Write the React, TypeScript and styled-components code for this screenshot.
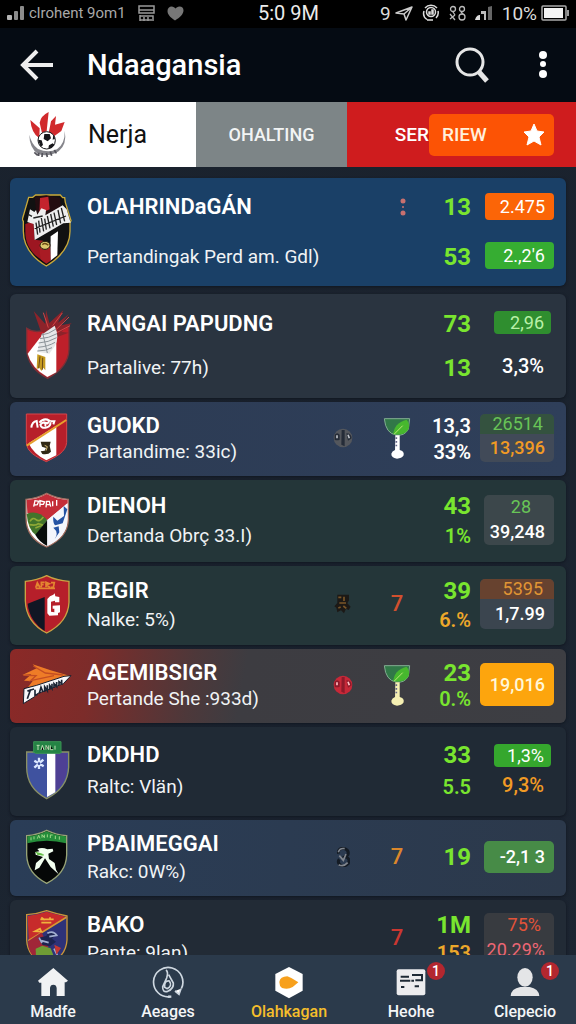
import React from 'react';
import styled, { createGlobalStyle } from 'styled-components';

const GlobalStyle = createGlobalStyle`
  * { box-sizing: border-box; }
  body { margin: 0; background: #1b232e; font-family: Roboto, "Liberation Sans", sans-serif; color: #fff; }
  button { font: inherit; color: inherit; border: 0; background: none; padding: 0; cursor: pointer; }
  svg { display: block; flex-shrink: 0; }
`;

const Screen = styled.div`
  display: flex;
  flex-direction: column;
  height: 100vh;
  background: linear-gradient(#1a222d, #1c2531);
`;

const StatusBar = styled.div`
  display: grid;
  grid-template-columns: 1fr auto 1fr;
  align-items: center;
  flex-shrink: 0;
  height: 28px;
  padding: 0 6px 2px 7px;
  background: #000;
  color: #dcdcdc;
`;
const StatusGroup = styled.div<{ $end?: boolean }>`
  display: flex;
  align-items: center;
  gap: ${p => (p.$end ? 9 : 12)}px;
  justify-content: ${p => (p.$end ? 'flex-end' : 'flex-start')};
`;
const Tight = styled.span`
  display: flex;
  align-items: center;
  gap: 4px;
`;
const Carrier = styled.span`
  font-size: 15px;
  color: #a9a9a9;
`;
const StatusText = styled.span`
  font-size: 19px;
`;
const Clock = styled.time`
  font-size: 20px;
  color: #ececec;
`;

const AppBar = styled.header`
  display: flex;
  align-items: center;
  flex-shrink: 0;
  height: 74px;
  padding: 0 25px 0 20px;
  background: #050b13;
`;
const Heading = styled.h1`
  flex: 1;
  margin: 0 0 0 33px;
  font-size: 29px;
  line-height: 36px;
  font-weight: 500;
`;
const IconButton = styled.button<{ $gap?: number }>`
  margin-left: ${p => p.$gap ?? 0}px;
`;

const Tabs = styled.nav`
  display: grid;
  grid-template-columns: 196fr 151fr 229fr;
  flex-shrink: 0;
  height: 65px;
`;
const TeamTab = styled.button`
  display: flex;
  align-items: center;
  gap: 19px;
  padding-left: 27px;
  background: #fff;
  color: #111;
  font-size: 25px;
`;
const PlainTab = styled.button`
  background: #7d8587;
  color: #f2f4f4;
  font-size: 18px;
  font-weight: 500;
`;
const AccentTab = styled.div`
  display: flex;
  align-items: center;
  justify-content: flex-end;
  padding-right: 22px;
  background: #cf1c1e;
  font-size: 19px;
  font-weight: 500;
`;
const SerButton = styled.button`
  padding-left: 20px;
`;
const ReviewButton = styled.button`
  display: flex;
  align-items: center;
  justify-content: space-between;
  width: 125px;
  height: 42px;
  padding: 0 9px 0 13px;
  border-radius: 5px;
  background: #fc5305;
  color: #fff0dc;
`;

const List = styled.ul`
  flex: 1;
  min-height: 0;
  display: flex;
  flex-direction: column;
  gap: 4px;
  margin: 0;
  padding: 11px 10px 0;
  overflow-y: auto;
  scrollbar-width: none;
  list-style: none;
`;
const Card = styled.li<{ $bg: string; $height: number; $after?: number }>`
  display: grid;
  grid-template-columns: 50px 1fr 40px 54px 63px 74px;
  align-items: center;
  flex-shrink: 0;
  min-height: ${p => p.$height}px;
  margin-bottom: ${p => p.$after ?? 0}px;
  padding: 0 12px 3px;
  border-radius: 6px;
  background: ${p => p.$bg};
  box-shadow: 0 1px 3px #10161f;
`;
const Stack = styled.div<{ $gap: number }>`
  display: flex;
  flex-direction: column;
  gap: ${p => p.$gap}px;
  white-space: nowrap;
`;
const NameStack = styled(Stack)`
  padding-left: 15px;
`;
const Name = styled.h2`
  margin: 0;
  font-size: 22px;
  line-height: 28px;
  font-weight: 600;
`;
const Detail = styled.p`
  margin: 0;
  font-size: 19px;
  line-height: 24px;
  color: #f0f3f5;
`;
const Slot = styled.div`
  display: flex;
  justify-content: center;
`;
const MarkSlot = styled(Slot)<{ $top?: boolean }>`
  align-self: ${p => (p.$top ? 'start' : 'center')};
  padding-left: ${p => (p.$top ? 26 : 14)}px;
  padding-top: ${p => (p.$top ? 20 : 0)}px;
`;
const Digit = styled.span<{ $color: string }>`
  font-size: 22px;
  line-height: 24px;
  font-weight: 500;
  color: ${p => p.$color};
`;
const ScoreStack = styled(Stack)`
  align-items: flex-end;
  padding-right: 9px;
`;
const Score = styled.span<{ $color: string; $big?: boolean }>`
  font-size: ${p => (p.$big ? 24 : 20)}px;
  line-height: 24px;
  font-weight: ${p => (p.$big ? 700 : 600)};
  color: ${p => p.$color};
  &:first-child { line-height: 28px; }
`;
const ValueStack = styled(Stack)`
  align-items: flex-end;
`;
const Pill = styled.span<{ $bg: string; $color?: string; $small?: boolean }>`
  width: ${p => (p.$small ? 57 : 69)}px;
  margin-right: ${p => (p.$small ? 3 : 0)}px;
  padding-right: ${p => (p.$small ? 7 : 9)}px;
  border-radius: 4px;
  background: ${p => p.$bg};
  color: ${p => p.$color ?? '#fff'};
  font-size: 18px;
  line-height: ${p => (p.$small ? 23 : 27)}px;
  text-align: right;
`;
const PlainValue = styled.span<{ $color: string }>`
  padding-right: 10px;
  font-size: 20px;
  line-height: 24px;
  font-weight: 500;
  color: ${p => p.$color};
`;
const Box = styled.div<{ $bg: string; $narrow?: boolean }>`
  justify-self: end;
  width: ${p => (p.$narrow ? 70 : 74)}px;
  border-radius: 5px;
  overflow: hidden;
  background: ${p => p.$bg};
`;
const BoxLine = styled.div<{ $color: string; $bg?: string; $tall?: number; $strong?: boolean; $inset?: number }>`
  padding-right: ${p => p.$inset ?? 9}px;
  background: ${p => p.$bg ?? 'transparent'};
  color: ${p => p.$color};
  font-size: 18px;
  font-weight: ${p => (p.$strong ? 500 : 400)};
  line-height: ${p => p.$tall ?? 24}px;
  text-align: right;
`;

const BottomNav = styled.nav`
  display: grid;
  grid-template-columns: 106fr 124fr 118fr 126fr 102fr;
  flex-shrink: 0;
  height: 69px;
  background: #2b3a4b;
`;
const NavItem = styled.a<{ $active?: boolean }>`
  display: flex;
  flex-direction: column;
  align-items: center;
  padding-top: 10px;
  gap: 3px;
  color: ${p => (p.$active ? '#f5be2b' : '#f3f5f7')};
  font-size: 16px;
  line-height: 20px;
  font-weight: 500;
  text-decoration: none;
`;
const NavGlyph = styled.span`
  position: relative;
  display: flex;
  align-items: center;
  height: 34px;
`;
const Count = styled.span`
  position: absolute;
  top: -3px;
  right: -19px;
  width: 18px;
  border-radius: 9px;
  background: #b3272f;
  color: #fff;
  font-size: 14px;
  line-height: 18px;
  text-align: center;
`;

/* ---------- status icons ---------- */
const Bars = () => (
  <svg width="18" height="16" viewBox="0 0 18 16" fill="#8c8c8c">
    <rect x="0" y="10" width="5" height="5" rx="1" fill="#b5b5b5" />
    <rect x="7" y="6" width="4" height="9" rx="1" />
    <rect x="13" y="1" width="4" height="14" rx="1" />
  </svg>
);
const Ticket = () => (
  <svg width="17" height="17" viewBox="0 0 17 17" fill="none" stroke="#999" strokeWidth="1.5">
    <path d="M1 1h15v7H1zM1 5h15M2 10v6M2 11h13v5M6 12v4M10 12v4M2 15h12" />
  </svg>
);
const Heart = () => (
  <svg width="17" height="15" viewBox="0 0 17 15" fill="#777">
    <path d="M8 14.5C3 11 .5 8.500.5 5 .5 2 2.500.5 4.500.5c2 0 3 1 4 2 1-1 2-2 4-2C15 .5 16.500 2 16.500 4.500 16.500 8 13 11.500 8 14.5z" />
  </svg>
);
const Plane = () => (
  <svg width="18" height="15" viewBox="0 0 18 15" fill="none" stroke="#ccc" strokeWidth="1.5" strokeLinejoin="round">
    <path d="M1 7 17 1 11 14 9 8zM9 8l8-7" />
  </svg>
);
const LockRing = () => (
  <svg width="18" height="18" viewBox="0 0 18 18" fill="none" stroke="#ddd" strokeWidth="1.500">
    <path d="M3 4a8 8 0 0 1 12 0M2 7a7.500 7.500 0 0 0 3 8.500M16 7a7.500 7.500 0 0 1-2 7M5 16h6" />
    <circle cx="9" cy="8" r="4.500" /><path d="M7 10V8h1v2zM10 10V6h1v4z" />
  </svg>
);
const Loops = () => (
  <svg width="17" height="17" viewBox="0 0 17 17" fill="none" stroke="#bbb" strokeWidth="1.300">
    <circle cx="4" cy="4" r="2.500" /><circle cx="13" cy="4" r="2.500" /><path d="M1 9l5 6M6 10l-5 4" /><circle cx="13" cy="12" r="3" /><path d="M4 7l2 3M12 7l2 2" />
  </svg>
);
const Ramp = () => (
  <svg width="18" height="16" viewBox="0 0 18 16">
    <path d="M0 15c1-4 3-5 5-5v5z" fill="#ddd" /><path d="M6 6h5v9H9V9H6z" fill="#bbb" /><path d="M13 2l4-1v14h-4z" fill="#666" />
  </svg>
);
const Battery = () => (
  <svg width="29" height="16" viewBox="0 0 29 16">
    <rect x="1" y="1" width="24" height="14" rx="1" fill="none" stroke="#aaa" strokeWidth="1.500" />
    <rect x="3" y="3" width="19" height="10" fill="#f4f4f4" /><path d="M26 5h2v6h-2z" fill="#999" />
  </svg>
);

/* ---------- crests ---------- */
const CrestSvg = ({ y, h, children }: { y: number; h: number; children: React.ReactNode }) => (
  <svg width="50" height={h / 3} viewBox={`66 ${y} 150 ${h}`} aria-hidden="true">{children}</svg>
);
const Crest1 = () => (
  <CrestSvg y={75} h={225}>
    <path d="M107 81H181L188 89H194L196 103 213 158 210 164V190C210 240 172 274 139 294 105 274 70 240 70 190V160L67 154 86 88H98z" fill="#111" stroke="#c9a93a" strokeWidth="4" />
    <path d="M104 86 139 82 180 90 184 122 110 150z" fill="#230d10" />
    <path d="M120 90 145 86 149 124 118 138z" fill="#c4232d" />
    <path d="M76 168 100 160 104 215 130 218 136 284 106 262C86 242 76 220 76 190z" fill="#9d1621" />
    <path d="M152 205 174 190 172 262 151 278z" fill="#fff" />
    <path d="M116 225 150 228 152 278 139 287 122 274z" fill="#a91b24" />
    <path d="M82 162 90 124 103 132 108 126 112 140 124 121 138 126 136 142 188 112 200 124 212 164 190 166 104 216 101 168z" fill="#eee" />
    <path d="M108 164l5 36M116 158l4 36M124 150l7 40M134 152l5 33M142 144l8 37M152 138l8 38M162 134l8 37M174 126l8 40M184 120l10 40M86 140l10 5M100 150l28-6M104 182 198 144" stroke="#222" strokeWidth="4" />
    <ellipse cx="135" cy="232" rx="15" ry="12" fill="#ddc66d" stroke="#251b0c" strokeWidth="3" /><path d="M127 230q8-8 18 2" stroke="#6b4b14" strokeWidth="4" fill="none" />
  </CrestSvg>
);
const Crest2 = () => (
  <CrestSvg y={414} h={216}>
    <path d="M80 472Q108 490 140 474 173 488 207 464V535Q205 590 143 622 80 590 80 530z" fill="#be202a" stroke="#7a3037" strokeWidth="4" />
    <path d="M120 500 83 548Q94 590 142 618L169 604V480z" fill="#fff" />
    <path d="M122 480 101 420 136 459 138 416 148 456 190 418 174 455 206 430 182 463 215 457 184 482 206 485 166 500z" fill="#8d232a" />
    <path d="M145 470 130 425M158 464 187 426M166 478 207 438M168 486 210 464" stroke="#d44445" strokeWidth="3" />
    <path d="M164 464Q180 500 164 526L148 548 112 542 124 492z" fill="#e6e8e9" />
    <path d="M124 492Q146 490 168 474M120 503Q146 502 171 488M116 516Q146 514 170 500M114 529Q146 526 165 514M112 540Q138 540 156 530M128 486 142 546" stroke="#8d9499" strokeWidth="3" fill="none" />
    <path d="M112 550 136 558 136 598 130 590 124 600 118 590 110 594z" fill="#c69b20" /><path d="M120 556 116 592M128 560 127 596" stroke="#6a4b17" strokeWidth="3" />
  </CrestSvg>
);
const Crest3 = () => (
  <CrestSvg y={54} h={153}>
    <path d="M79 60H200V145C198 174 169 188 139 203 108 188 80 174 79 145z" fill="#b71f2a" stroke="#d6464a" strokeWidth="3" />
    <path d="M86 148 169 95V184L139 199Q100 180 86 148z" fill="#fff" /><path d="M80 155 199 78" stroke="#e6a02d" strokeWidth="6" />
    <path d="M94 101q2-18 16-20l3 20M118 86q14-16 30-6l-5 8q-15-7-22 4 2 13 20 8 12-5 10-15M130 84q10 5 5 12M151 82h12l-3 9" fill="none" stroke="#fff" strokeWidth="6" />
    <path d="M122 143h30l-3 12 4 18q-8 10-26 7l-5-8 12-2 4-8-12-4z" fill="#302815" /><path d="M134 154l8 4-4 12" stroke="#d7bc72" strokeWidth="3" fill="none" />
  </CrestSvg>
);
const Crest4 = () => (
  <CrestSvg y={285} h={174}>
    <path d="M78 310Q112 307 140 292 170 307 205 310V370Q204 424 140 453 78 426 78 365z" fill="#fff" stroke="#a16c5f" strokeWidth="4" />
    <path d="M80 312Q112 310 140 294 170 310 203 312V322L142 372 82 352z" fill="#c42d38" />
    <path d="M80 354Q112 340 142 372L108 418Q84 402 80 354z" fill="#42742b" /><path d="M142 372V450Q116 436 106 416z" fill="#080d0c" />
    <path d="M142 372 202 322V370Q202 424 142 450z" fill="#f4f6fc" /><path d="M160 362q-2 20 6 26l22-6 14-42-11-10 1 30-20 14zM160 395q18 15 4 34l14-20-2-18z" fill="#2452a4" />
    <path d="M90 376q8-14 18-5t22-8M88 386q20 4 27-3l14 4M106 396l20-8" fill="none" stroke="#8fa936" strokeWidth="5" />
    <path d="M101 332l4-18 11 2-4 10-10 1M120 332v-18l14 4-4 7-9 0M138 334l2-18h8l4 16M140 326h12M158 316v15M170 312v17" stroke="#fff" strokeWidth="4" fill="none" />
  </CrestSvg>
);
const Crest5 = () => (
  <CrestSvg y={45} h={183}>
    <path d="M76 67Q112 64 140 50 170 65 207 67V130Q204 190 140 222 78 190 76 125z" fill="#b61f2a" stroke="#caa343" strokeWidth="4" />
    <path d="M83 134 134 114V216Q88 185 83 134z" fill="#111624" /><path d="M142 120 150 112 160 107 164 103 166 112 178 114V130H165V125L153 128V158L163 160V149L158 149V140L180 139V160L174 162V169L148 170 142 163z" fill="#fff" />
    <path d="M107 86l5-15 8 14M110 80h8M124 85V70h10M123 77h8M138 84V70l10 4-9 4 11 7M153 71h10l-3 14h-8M107 88h58" stroke="#e48630" strokeWidth="5" fill="none" />
  </CrestSvg>
);
const Crest6 = () => (
  <CrestSvg y={309} h={129}>
    <path d="M72 362 94 343 67 345 110 325 98 313 152 331 210 348 180 366 73 396 98 363z" fill="#ee7c27" /><path d="M70 346 108 347 92 362 162 347M100 318 136 339 190 345" stroke="#c44e23" strokeWidth="4" fill="none" />
    <path d="M72 386 110 376 192 349 213 347 190 371 112 401 104 410 70 431z" fill="#f7f7fa" stroke="#151a29" strokeWidth="3" />
    <path d="M92 388 82 416M82 393 102 387M105 389v17l8-3M118 400l5-18 6 14M134 396V380l8 12V376M149 389V376l7 10V371M162 384V371l8 9V366M177 376V365l8 6V359" stroke="#1c2535" strokeWidth="5" fill="none" />
  </CrestSvg>
);
const Crest7 = () => (
  <CrestSvg y={63} h={180}>
    <path d="M80 99H206V145Q203 208 140 239 80 208 80 145z" fill="#3f529f" stroke="#8a9064" strokeWidth="4" />
    <path d="M165 102H202V145Q199 194 165 218z" fill="#4e4094" /><path d="M141 100H166V220L141 234z" fill="#fff" />
    <path d="M101 68H183V98H186L180 103H107L98 98H101z" fill="#248344" stroke="#3a9254" strokeWidth="3" />
    <path d="M110 79h9M114 79v14M123 93l4-14 5 14M138 92V79l8 13V79M151 79v13h9M165 80v12" stroke="#bce0b3" strokeWidth="3" />
    <path d="M117 116v34M103 125l28 17M130 122 103 146" stroke="#dce8ff" strokeWidth="7" /><circle cx="117" cy="134" r="4" fill="#3f529f" />
  </CrestSvg>
);
const Crest8 = () => (
  <CrestSvg y={330} h={168}>
    <path d="M80 350Q112 348 140 334 170 348 200 350V408Q198 464 140 493 82 464 80 408z" fill="#050707" stroke="#98a477" strokeWidth="4" />
    <path d="M82 352Q112 350 140 337 170 350 198 352V373Q140 357 82 373z" fill="#258d3a" /><path d="M93 364v-9M102 361v-9M112 359l4-10 4 9M126 356v-9l7 9v-9M142 355v-9M151 357v-9h7M166 360v-10M178 362v-10" stroke="#9ed88a" strokeWidth="3" fill="none" />
    <path d="M118 397 112 390Q127 383 142 391L158 389 160 397 145 404 147 420 164 432 168 452 176 466 152 444 135 418 118 446 104 454 108 432 129 414 107 407 106 399z" fill="#f2fff0" /><path d="M111 405 131 408M107 400l20 6" stroke="#65bf48" strokeWidth="4" fill="none" />
  </CrestSvg>
);
const Crest9 = () => (
  <CrestSvg y={57} h={171}>
    <path d="M80 74Q112 72 140 62 170 72 201 78V150Q198 202 140 225 82 202 80 150z" fill="#2e3278" stroke="#c9953a" strokeWidth="4" />
    <path d="M83 78Q112 74 140 65L197 80 86 150z" fill="#c72b2b" /><path d="M85 152 199 82" stroke="#dd962e" strokeWidth="5" />
    <path d="M84 154 125 127 145 170 110 208Q84 190 84 154z" fill="#a02638" /><path d="M107 176l20-9 25 8 8 20-30 22-22-16z" fill="#6f9c35" />
    <path d="M121 88h40M124 98h30M124 82l10 8M150 82v8M105 124l15-8 4 9z" stroke="#efb23c" strokeWidth="5" fill="none" />
    <path d="M114 145l14 20 22 4 18-14-12-9 14-14-24-8-7 14-14 3z" fill="#1c2450" /><path d="M117 143l9 16M124 152l22 6M142 130q18-9 28 6l-22 4M162 176l11 22" stroke="#a1adcf" strokeWidth="5" fill="none" /><path d="M163 164l20 10-14 20z" fill="#c63732" />
  </CrestSvg>
);

const ClubLogo = () => (
  <svg width="42" height="48" viewBox="81 330 126 144" aria-hidden="true">
    <path d="M118 412Q94 396 91 357L119 382zM126 396 119 365Q122 345 146 333L140 390zM146 396 153 361 168 345 165 371 194 363 184 390 159 408z" fill="#d12a2d" />
    <path d="M88 401Q88 440 114 459 145 470 176 451 202 429 194 389 196 426 171 445 145 457 114 444 94 429 88 401z" fill="#85858b" />
    <path d="M103 454l10 9M116 455v10M127 456l-1 12M139 456l3 12M151 452l4 12M163 447l6 10" stroke="#54535b" strokeWidth="5" />
    <circle cx="140" cy="418" r="26" fill="#fff" stroke="#19191c" strokeWidth="3" />
    <path d="M133 399h16l4 13-10 9-12-7zM114 416l11 2 4 14-7 6zM147 433l11-6 6 5-10 10-9-2zM160 401l5 12-7 3z" fill="#17171b" />
  </svg>
);

/* ---------- row marks ---------- */
const Dots = () => (
  <svg width="6" height="18" viewBox="0 0 6 18" fill="#c7706f"><circle cx="3" cy="3" r="2.500" /><circle cx="3" cy="9" r="1" /><circle cx="3" cy="15" r="2.500" /></svg>
);
const Trophy = ({ base }: { base: string }) => (
  <svg width="28" height="42" viewBox="0 0 84 126">
    <path d="M4 5H80L76 36Q65 58 40 54 8 50 4 5z" fill="#317848" stroke="#82ad91" strokeWidth="3" />
    <path d="M31 52Q32 19 71 8 84 24 75 39 64 56 31 52z" fill="#47b82e" /><path d="M34 51 59 26" stroke="#bce676" strokeWidth="3" />
    <path d="M37 55H50V102H36z" fill={base} /><path d="M40 61v5m0 6v5m0 6v5" stroke="#668" strokeWidth="5" />
    <path d="M36 99H50Q64 102 62 115 56 125 42 125 24 122 25 110 27 102 36 99z" fill={base} />
  </svg>
);
const Ball = ({ red }: { red?: boolean }) => (
  <svg width="20" height="20" viewBox="0 0 60 60">
    <circle cx="30" cy="30" r="28" fill={red ? '#c72838' : '#54575d'} />
    <path d="M5 20q8-9 15 0v15q-8 4-15 0zM40 16q15 0 16 15l-11 7zM26 6h9v49l-10-5z" fill={red ? '#8d1a2a' : '#252c38'} />
    <path d="M12 22v9M45 20l4 11" stroke={red ? '#ffbec2' : '#bdc1c7'} strokeWidth="5" />
  </svg>
);
const Figure = () => (
  <svg width="18" height="20" viewBox="0 0 54 60"><path d="M10 2h35v17l-5 9 10 10-6 10-8-4-6 14-9-9-11 6-3-14-6-4 9-10z" fill="#1c1916" /><path d="M13 10h9M30 8v13M16 27h20M28 36l9 7M13 42l7-3" stroke="#795528" strokeWidth="5" /></svg>
);
const Knot = () => (
  <svg width="14" height="20" viewBox="0 0 42 60" fill="none"><path d="M8 20Q4 4 23 4q17 5 13 19l-9 6q17 5 10 20-15 15-27 2-6-7 0-14" stroke="#141b24" strokeWidth="9" /><path d="M7 16Q11 2 26 5M10 26l12 14 8-19M8 53q14 8 27-6" stroke="#81868e" strokeWidth="5" /></svg>
);

const G = '#79e52f';
const O = '#f19a24';

interface Row {
  name: string; detail: string; crest: React.ReactNode; bg: string; height: number; gap: number; after?: number;
  ball?: React.ReactNode; mark?: React.ReactNode; markTop?: boolean;
  scores: { text: string; color: string; big?: boolean }[];
  values: React.ReactNode;
}
const rows: Row[] = [
  { name: 'OLAHRINDaGÁN', detail: 'Pertandingak Perd am. Gdl)', crest: <Crest1 />, bg: '#1a4067', height: 108, gap: 24, after: 4,
    mark: <Dots />, markTop: true,
    scores: [{ text: '13', color: G, big: true }, { text: '53', color: G, big: true }],
    values: <ValueStack $gap={22}><Pill $bg="#fb6507">2.475</Pill><Pill $bg="#36ad32">2.,2'6</Pill></ValueStack> },
  { name: 'RANGAI PAPUDNG', detail: 'Partalive: 77h)', crest: <Crest2 />, bg: '#2a3440', height: 104, gap: 18,
    scores: [{ text: '73', color: G, big: true }, { text: '13', color: G, big: true }],
    values: <ValueStack $gap={20}><Pill $small $bg="#2f8e2f" $color="#b9f0a8">2,96</Pill><PlainValue $color="#fff">3,3%</PlainValue></ValueStack> },
  { name: 'GUOKD', detail: 'Partandime: 33ic)', crest: <Crest3 />, bg: 'linear-gradient(90deg, #2c3b53, #2f3f5a)', height: 74, gap: 0,
    ball: <Ball />, mark: <Trophy base="#fff" />,
    scores: [{ text: '13,3', color: '#fff' }, { text: '33%', color: '#fff' }],
    values: <Box $bg="#414a58"><BoxLine $color="#68c457" $bg="#34523f" $tall={20} $inset={11}>26514</BoxLine><BoxLine $color={O} $strong $tall={28}>13,396</BoxLine></Box> },
  { name: 'DIENOH', detail: 'Dertanda Obrç 33.I)', crest: <Crest4 />, bg: '#243639', height: 82, gap: 4,
    scores: [{ text: '43', color: G, big: true }, { text: '1%', color: G }],
    values: <Box $bg="#3c474b" $narrow><BoxLine $color="#68c457" $inset={23}>28</BoxLine><BoxLine $color="#fff" $strong $tall={26}>39,248</BoxLine></Box> },
  { name: 'BEGIR', detail: 'Nalke: 5%)', crest: <Crest5 />, bg: '#243639', height: 79, gap: 3,
    ball: <Figure />, mark: <Digit $color="#d1502e">7</Digit>,
    scores: [{ text: '39', color: G, big: true }, { text: '6.%', color: '#eda82a' }],
    values: <Box $bg="#3b454f"><BoxLine $color="#e09534" $bg="#67422f" $tall={20} $inset={11}>5395</BoxLine><BoxLine $color="#fff" $strong $tall={30}>1,7.99</BoxLine></Box> },
  { name: 'AGEMIBSIGR', detail: 'Pertande She :933d)', crest: <Crest6 />, bg: 'linear-gradient(100deg, #8b2927 0%, #7c2c2a 15%, #4d383a 33%, #3d3c41 42%, #3d3e43 100%)', height: 74, gap: 0,
    ball: <Ball red />, mark: <Trophy base="#f5efb2" />,
    scores: [{ text: '23', color: G, big: true }, { text: '0.%', color: G }],
    values: <Box $bg="#fda50d"><BoxLine $color="#fff7d8" $strong $tall={43}>19,016</BoxLine></Box> },
  { name: 'DKDHD', detail: 'Raltc: Vlän)', crest: <Crest7 />, bg: '#202a35', height: 89, gap: 6,
    scores: [{ text: '33', color: G, big: true }, { text: '5.5', color: G }],
    values: <ValueStack $gap={6}><Pill $small $bg="#35a72d">1,3%</Pill><PlainValue $color={O}>9,3%</PlainValue></ValueStack> },
  { name: 'PBAIMEGGAI', detail: 'Rakc: 0W%)', crest: <Crest8 />, bg: 'linear-gradient(90deg, #2a3d57, #2c394b)', height: 76, gap: 2,
    ball: <Knot />, mark: <Digit $color="#dc872b">7</Digit>,
    scores: [{ text: '19', color: G, big: true }],
    values: <Box $bg="#478b47" $narrow><BoxLine $color="#fff" $strong $tall={32}>-2,1 3</BoxLine></Box> },
  { name: 'BAKO', detail: 'Pante: 9lan)', crest: <Crest9 />, bg: '#222b36', height: 78, gap: 2,
    mark: <Digit $color="#cb3731">7</Digit>,
    scores: [{ text: '1M', color: G, big: true }, { text: '153', color: '#eda82a' }],
    values: <Box $bg="#383b40" $narrow><BoxLine $color="#e35339" $inset={13}>75%</BoxLine><BoxLine $color="#ed6775" $tall={26}>20.29%</BoxLine></Box> },
];

const HomeIcon = () => (
  <svg width="30" height="29" viewBox="0 0 90 87" fill="#f1f2f3"><path d="M46 0 90 38 84 43H80V84H56V60Q55 50 46 50 37 50 36 60V84H10V44H4L0 38z" /></svg>
);
const CompassIcon = () => (
  <svg width="32" height="32" viewBox="0 0 96 96" fill="none" stroke="#cfd8e1" strokeWidth="5">
    <path d="M54 92A44 44 0 1 1 88 68" /><path d="M48 92H58" strokeWidth="7" /><path d="M42 12Q50 18 44 36L32 62Q31 80 47 76 66 68 64 51L50 26M38 64Q36 43 52 45 62 60 45 68z" /><path d="M69 75l12 10 6-17" fill="#fff" />
  </svg>
);
const HexIcon = () => (
  <svg width="30" height="33" viewBox="0 0 90 99"><path d="M45 3 86 24V74L45 97 4 74V24z" fill="#fff" /><path d="M16 48Q18 32 40 31L52 36 73 49 56 63Q42 72 24 66 16 60 16 48z" fill="#f7a01c" /></svg>
);
const NewsIcon = () => (
  <svg width="30" height="29" viewBox="0 0 90 87"><rect x="2" y="4" width="86" height="78" rx="6" fill="#ececee" /><path d="M14 26H39M48 21H78V37H58M12 38H43M46 38H54M15 57H25M56 55H69" stroke="#1d2935" strokeWidth="6" fill="none" /></svg>
);
const PersonIcon = () => (
  <svg width="30" height="29" viewBox="0 0 90 87" fill="#e4e5e7"><ellipse cx="45" cy="28" rx="23" ry="28" /><path d="M2 84Q3 62 31 57H59Q86 62 88 84z" /></svg>
);

const navItems = [
  { label: 'Madfe', icon: <HomeIcon /> },
  { label: 'Aeages', icon: <CompassIcon /> },
  { label: 'Olahkagan', icon: <HexIcon />, active: true },
  { label: 'Heohe', icon: <NewsIcon />, count: 1 },
  { label: 'Clepecio', icon: <PersonIcon />, count: 1 },
];

export default function App() {
  return (
    <Screen>
      <GlobalStyle />
      <StatusBar>
        <StatusGroup>
          <Tight><Bars /><Carrier>clrohent 9om1</Carrier></Tight>
          <Ticket /><Heart />
        </StatusGroup>
        <Clock>5:0 9M</Clock>
        <StatusGroup $end>
          <Tight><StatusText>9</StatusText><Plane /></Tight>
          <LockRing /><Loops /><Ramp />
          <Tight><StatusText>10%</StatusText><Battery /></Tight>
        </StatusGroup>
      </StatusBar>

      <AppBar>
        <IconButton aria-label="Back">
          <svg width="34" height="32" viewBox="0 0 34 32" fill="none" stroke="#eee" strokeWidth="4"><path d="M17 2 3 16l14 14M3 16h30" /></svg>
        </IconButton>
        <Heading>Ndaagansia</Heading>
        <IconButton aria-label="Search">
          <svg width="34" height="36" viewBox="0 0 34 36" fill="none" stroke="#e6e6e6" strokeWidth="3"><circle cx="15" cy="15" r="13" /><path d="M24 25l8 9" strokeWidth="5" /></svg>
        </IconButton>
        <IconButton aria-label="More" $gap={46}>
          <svg width="16" height="28" viewBox="0 0 16 28" fill="#fff"><circle cx="8" cy="4" r="4" /><circle cx="8" cy="13" r="3" /><circle cx="8" cy="23" r="4" /></svg>
        </IconButton>
      </AppBar>

      <Tabs>
        <TeamTab><ClubLogo />Nerja</TeamTab>
        <PlainTab>OHALTING</PlainTab>
        <AccentTab>
          <SerButton>SER</SerButton>
          <ReviewButton>
            RIEW
            <svg width="22" height="24" viewBox="0 0 22 24" fill="#fff" stroke="#fff" strokeWidth="1" strokeLinejoin="round"><path d="M11 1 14 8 21 9 16 14 18 22 11 18 4 22 6 14 1 9 8 8z" /></svg>
          </ReviewButton>
        </AccentTab>
      </Tabs>

      <List>
        {rows.map(r => (
          <Card key={r.name} $bg={r.bg} $height={r.height} $after={r.after}>
            <Slot>{r.crest}</Slot>
            <NameStack $gap={r.gap}><Name>{r.name}</Name><Detail>{r.detail}</Detail></NameStack>
            <Slot>{r.ball}</Slot>
            <MarkSlot $top={r.markTop}>{r.mark}</MarkSlot>
            <ScoreStack $gap={r.gap}>
              {r.scores.map(s => <Score key={s.text} $color={s.color} $big={s.big}>{s.text}</Score>)}
            </ScoreStack>
            {r.values}
          </Card>
        ))}
      </List>

      <BottomNav>
        {navItems.map(n => (
          <NavItem key={n.label} href="#" $active={n.active}>
            <NavGlyph>{n.icon}{n.count && <Count>{n.count}</Count>}</NavGlyph>
            {n.label}
          </NavItem>
        ))}
      </BottomNav>
    </Screen>
  );
}
